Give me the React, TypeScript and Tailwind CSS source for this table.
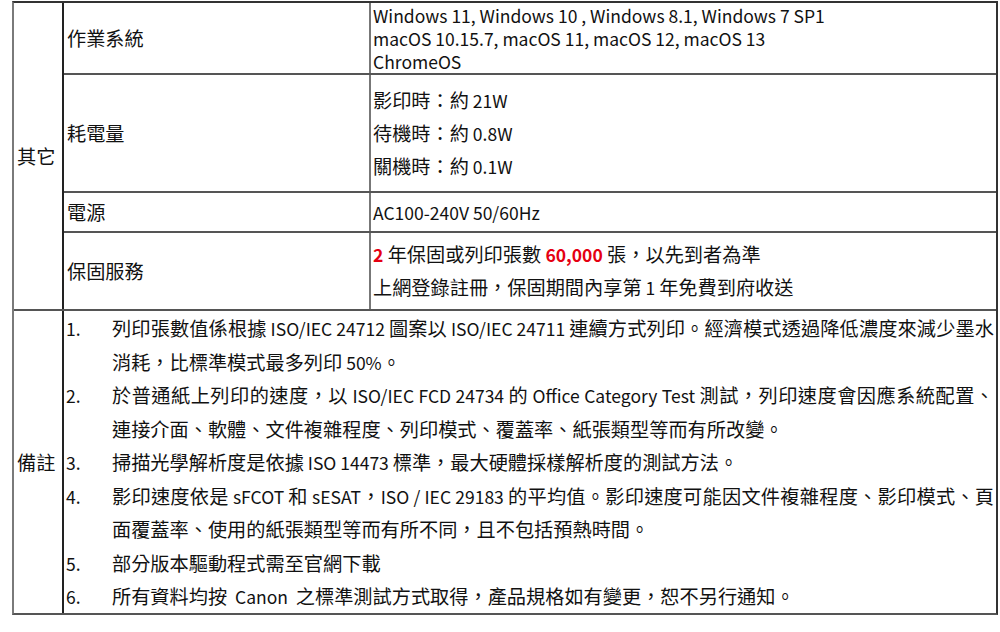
import React from "react";

const red = "text-[#e50012] font-bold";

// Latin runs are set a touch smaller: the CJK font's Latin glyphs are wider than the original's
function mix(text: string) {
  return text.split(/([\u0020-\u007E]+)/).map((part, i) =>
    /^[\u0020-\u007E]+$/.test(part) ? (
      <span key={i} className="text-[17.5px]">
        {part}
      </span>
    ) : (
      part
    )
  );
}

const notes: { n: string; lines: string[] }[] = [
  {
    n: "1.",
    lines: [
      "列印張數值係根據 ISO/IEC 24712 圖案以 ISO/IEC 24711 連續方式列印。經濟模式透過降低濃度來減少墨水",
      "消耗，比標準模式最多列印 50%。",
    ],
  },
  {
    n: "2.",
    lines: [
      "於普通紙上列印的速度，以  ISO/IEC FCD 24734 的 Office Category Test  測試，列印速度會因應系統配置、",
      "連接介面、軟體、文件複雜程度、列印模式、覆蓋率、紙張類型等而有所改變。",
    ],
  },
  { n: "3.", lines: ["掃描光學解析度是依據 ISO 14473 標準，最大硬體採樣解析度的測試方法。"] },
  {
    n: "4.",
    lines: [
      "影印速度依是 sFCOT 和 sESAT，ISO / IEC 29183 的平均值。影印速度可能因文件複雜程度、影印模式、頁",
      "面覆蓋率、使用的紙張類型等而有所不同，且不包括預熱時間。",
    ],
  },
  { n: "5.", lines: ["部分版本驅動程式需至官網下載"] },
  { n: "6.", lines: ["所有資料均按  Canon  之標準測試方式取得，產品規格如有變更，恕不另行通知。"] },
];

function Row({
  label,
  h,
  last,
  leading,
  children,
}: {
  label: string;
  h: string;
  last?: boolean;
  leading: string;
  children: React.ReactNode;
}) {
  return (
    <div className={`flex ${h} ${last ? "" : "border-b-2 border-[#555]"}`}>
      <div className="w-[307px] shrink-0 border-r-2 border-[#777] flex items-center pl-[3px]">
        {label}
      </div>
      <div className={`flex-1 flex flex-col justify-center pl-[2px] ${leading}`}>{children}</div>
    </div>
  );
}

export default function App() {
  return (
    <div className="w-[1000px] h-[632px] bg-white pt-[1px] pl-[12px] text-[#111] text-[19.2px] font-['Noto_Sans_CJK_TC',sans-serif] whitespace-pre">
      <div className="w-[986px] border-2 border-l-[#7a7a7a] border-t-[#333] border-r-[#333] border-b-[#555]">
        {/* 其它 */}
        <div className="flex border-b-2 border-[#555]">
          <div className="w-[50px] shrink-0 border-r-2 border-[#222] flex items-center pl-[3px]">
            其它
          </div>
          <div className="flex-1 flex flex-col">
            <Row label="作業系統" h="h-[72px]" leading="leading-[23px] text-[17.5px]">
              <div>Windows 11, Windows 10 , Windows 8.1, Windows 7 SP1</div>
              <div>macOS 10.15.7, macOS 11, macOS 12, macOS 13</div>
              <div>ChromeOS</div>
            </Row>
            <Row label="耗電量" h="h-[118px]" leading="leading-[33px]">
              <div>{mix("影印時：約 21W")}</div>
              <div>{mix("待機時：約 0.8W")}</div>
              <div>{mix("關機時：約 0.1W")}</div>
            </Row>
            <Row label="電源" h="h-[40px]" leading="leading-[33px]">
              <div className="text-[17.5px]">AC100-240V 50/60Hz</div>
            </Row>
            <Row label="保固服務" h="h-[76px]" last leading="leading-[33px]">
              <div>
                <span className={`${red} text-[17.5px]`}>2</span> 年保固或列印張數{" "}
                <span className={`${red} text-[17.5px]`}>60,000</span> 張，以先到者為準
              </div>
              <div>{mix("上網登錄註冊，保固期間內享第 1 年免費到府收送")}</div>
            </Row>
          </div>
        </div>
        {/* 備註 */}
        <div className="flex h-[302px]">
          <div className="w-[50px] shrink-0 border-r-2 border-[#222] flex items-center pl-[3px]">
            備註
          </div>
          <div className="flex-1 flex flex-col justify-center pt-[2px] leading-[33.5px]">
            {notes.map((item) => (
              <div key={item.n} className="flex">
                <div className="w-[48px] shrink-0 pl-[2px] text-[17.5px]">{item.n}</div>
                <div className="flex-1 pr-[2px]">
                  {item.lines.map((l, i) => (
                    <div
                      key={i}
                      className={
                        i < item.lines.length - 1
                          ? "text-justify [text-align-last:justify] whitespace-nowrap"
                          : ""
                      }
                    >
                      {mix(l)}
                    </div>
                  ))}
                </div>
              </div>
            ))}
          </div>
        </div>
      </div>
    </div>
  );
}
